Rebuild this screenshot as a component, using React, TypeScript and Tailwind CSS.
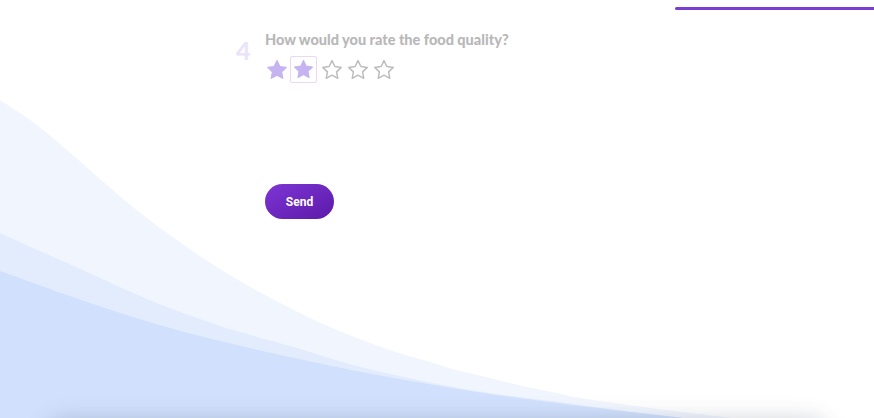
import React from 'react';

type Pt = [number, number];

// smooth path through the measured points (catmull-rom -> cubic bezier)
const smooth = (pts: Pt[]) => {
  let d = `M${pts[0][0]},${pts[0][1]}`;
  for (let i = 0; i < pts.length - 1; i++) {
    const p0 = pts[i - 1] || pts[i];
    const p1 = pts[i];
    const p2 = pts[i + 1];
    const p3 = pts[i + 2] || p2;
    const c1x = p1[0] + (p2[0] - p0[0]) / 6;
    const c1y = p1[1] + (p2[1] - p0[1]) / 6;
    const c2x = p2[0] - (p3[0] - p1[0]) / 6;
    const c2y = p2[1] - (p3[1] - p1[1]) / 6;
    d += ` C${c1x.toFixed(1)},${c1y.toFixed(1)} ${c2x.toFixed(1)},${c2y.toFixed(1)} ${p2[0]},${p2[1]}`;
  }
  return d + ' L0,430 Z';
};

const light: Pt[] = [
  [0, 100], [33, 122], [67, 150], [100, 179], [133, 207], [167, 233], [200, 256], [233, 277],
  [267, 296], [290, 308], [323, 324], [357, 338], [390, 350], [423, 360], [457, 370],
  [490, 378], [523, 386], [557, 393], [580, 398], [650, 408], [750, 420],
];
const mid: Pt[] = [
  [0, 233], [33, 248], [67, 263], [100, 278], [133, 293], [167, 307], [200, 319], [233, 330],
  [290, 346], [357, 366], [423, 381], [490, 393], [580, 405], [700, 421],
];
const deep: Pt[] = [
  [0, 271], [67, 295], [133, 317], [200, 336], [290, 357], [357, 371], [423, 383],
  [490, 394], [580, 406], [710, 421],
];

const Waves: React.FC = () => (
  <svg className="absolute inset-0 w-full h-full" viewBox="0 0 874 418" preserveAspectRatio="none">
    <path d={smooth(light)} fill="#f1f6fe" />
    <path d={smooth(mid)} fill="#e2ecfd" />
    <path d={smooth(deep)} fill="#d1e1fd" />
  </svg>
);

const Star: React.FC<{ filled?: boolean; size?: number }> = ({ filled, size = 24 }) => (
  <svg width={size} height={size} viewBox="0 0 24 24">
    <path
      d="M12 2.6l2.85 5.9 6.45.9-4.7 4.5 1.15 6.4L12 17.2l-5.75 3.1 1.15-6.4-4.7-4.5 6.45-.9z"
      fill={filled ? '#c6b3f1' : 'none'}
      stroke={filled ? '#c6b3f1' : '#bdbdbd'}
      strokeWidth={filled ? 1.2 : 1.5}
      strokeLinejoin="round"
    />
  </svg>
);

const App: React.FC = () => {
  return (
    <div className="relative w-full h-[418px] overflow-hidden bg-white">
      <Waves />
      {/* next card peeking below the fold */}
      <div className="absolute left-[50px] right-[50px] top-[422px] h-[40px] rounded-xl bg-white shadow-[0_0_24px_rgba(50,60,90,0.28)]" />

      <div className="relative">
        <div className="flex justify-end pt-[7px]">
          <div className="w-[199px] h-[3px] rounded-l-full bg-[#7a3fd0]" />
        </div>

        <div className="flex pl-[236px] pt-[21px]" style={{ fontFamily: 'Lato, "Open Sans", sans-serif' }}>
          <div className="w-[29px] pt-[7px] text-[25px] font-black leading-none text-[#e9e4fa]">4</div>
          <div className="flex flex-col">
            <p className="text-[14.5px] leading-[18px] font-black text-[#b8b8b8]">How would you rate the food quality?</p>
            <div className="flex items-center mt-[7px]">
              <Star filled />
              <div className="ml-[1px] w-[27px] h-[27px] flex items-center justify-center rounded-[2px] border-[1.5px] border-[#ecd8ef]">
                <Star filled size={23} />
              </div>
              <div className="ml-[3px]"><Star /></div>
              <div className="ml-[2px]"><Star /></div>
              <div className="ml-[2px]"><Star /></div>
            </div>
            <button
              className="mt-[101px] w-[69px] h-[35px] rounded-full bg-gradient-to-br from-[#7e35d5] to-[#5c19a9] text-white text-[12px] font-bold"
              style={{ fontFamily: 'Roboto, "Liberation Sans", sans-serif' }}
            >
              Send
            </button>
          </div>
        </div>
      </div>
    </div>
  );
};

export default App;
